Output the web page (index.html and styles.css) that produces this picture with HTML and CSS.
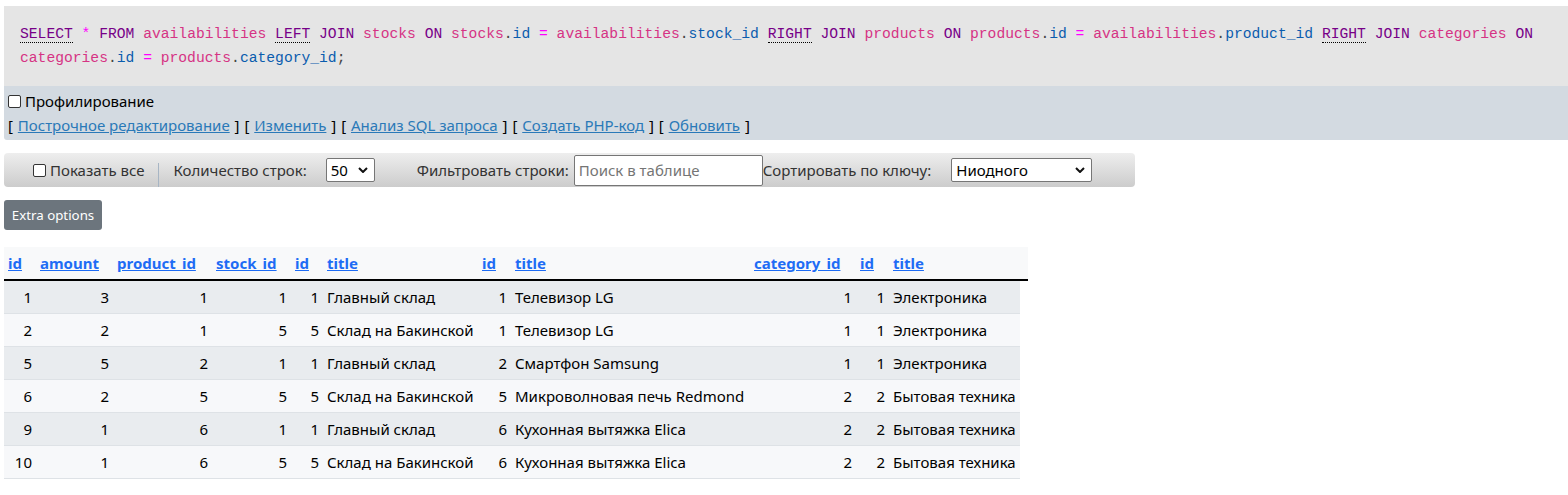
FILE: index.html
```html
<!DOCTYPE html>
<html lang="ru">
<head>
<meta charset="utf-8">
<title>SQL result</title>
<link rel="stylesheet" href="styles.css">
</head>
<body>
<div class="page">
  <div class="sqlbox"><code class="sql"><abbr class="kw" title="SELECT">SELECT</abbr> <span class="op">*</span> <span class="kw">FROM</span> <span class="tb">availabilities</span> <abbr class="kw" title="LEFT JOIN">LEFT</abbr> <span class="kw">JOIN</span> <span class="tb">stocks</span> <span class="kw">ON</span> <span class="tb">stocks</span><span class="dot">.</span><span class="col">id</span> <span class="op">=</span> <span class="tb">availabilities</span><span class="dot">.</span><span class="col">stock_id</span> <abbr class="kw" title="RIGHT JOIN">RIGHT</abbr> <span class="kw">JOIN</span> <span class="tb">products</span> <span class="kw">ON</span> <span class="tb">products</span><span class="dot">.</span><span class="col">id</span> <span class="op">=</span> <span class="tb">availabilities</span><span class="dot">.</span><span class="col">product_id</span> <abbr class="kw" title="RIGHT JOIN">RIGHT</abbr> <span class="kw">JOIN</span> <span class="tb">categories</span> <span class="kw">ON</span> <span class="tb">categories</span><span class="dot">.</span><span class="col">id</span> <span class="op">=</span> <span class="tb">products</span><span class="dot">.</span><span class="col">category_id</span><span class="dot">;</span></code></div>
  <div class="tools">
    <label class="prof"><input type="checkbox" class="cb"> Профилирование</label>
    <div class="links">[ <a href="#">Построчное редактирование</a> ] [ <a href="#">Изменить</a> ] [ <a href="#">Анализ SQL запроса</a> ] [ <a href="#">Создать PHP-код</a> ] [ <a href="#">Обновить</a> ]</div>
  </div>

  <div class="navbar">
    <label class="showall"><input type="checkbox" class="cb"> Показать все</label>
    <span class="sep"></span>
    <span class="lbl">Количество строк:</span>
    <span class="sel sel-rows">50<svg class="chev" viewBox="0 0 10 6" width="10" height="6"><path d="M1 1 L5 5 L9 1" fill="none" stroke="#111" stroke-width="2"/></svg></span>
    <span class="lbl lbl-filter">Фильтровать строки:</span>
    <span class="search">Поиск в таблице</span>
    <span class="lbl lbl-sort">Сортировать по ключу:</span>
    <span class="sel sel-sort">Ниодного<svg class="chev" viewBox="0 0 10 6" width="10" height="6"><path d="M1 1 L5 5 L9 1" fill="none" stroke="#111" stroke-width="2"/></svg></span>
  </div>

  <div class="extra-row"><span class="extra">Extra options</span></div>

  <table class="data">
    <thead>
      <tr>
        <th class="c1"><a href="#">id</a></th>
        <th class="c2"><a href="#">amount</a></th>
        <th class="c3"><a href="#">product_id</a></th>
        <th class="c4"><a href="#">stock_id</a></th>
        <th class="c5"><a href="#">id</a></th>
        <th class="c6"><a href="#">title</a></th>
        <th class="c7"><a href="#">id</a></th>
        <th class="c8"><a href="#">title</a></th>
        <th class="c9"><a href="#">category_id</a></th>
        <th class="c10"><a href="#">id</a></th>
        <th class="c11"><a href="#">title</a></th>
        <th class="c12"></th>
      </tr>
    </thead>
    <tbody>
      <tr><td class="n">1</td><td class="n">3</td><td class="n">1</td><td class="n">1</td><td class="n">1</td><td>Главный склад</td><td class="n">1</td><td>Телевизор LG</td><td class="n">1</td><td class="n">1</td><td>Электроника</td></tr>
      <tr><td class="n">2</td><td class="n">2</td><td class="n">1</td><td class="n">5</td><td class="n">5</td><td>Склад на Бакинской</td><td class="n">1</td><td>Телевизор LG</td><td class="n">1</td><td class="n">1</td><td>Электроника</td></tr>
      <tr><td class="n">5</td><td class="n">5</td><td class="n">2</td><td class="n">1</td><td class="n">1</td><td>Главный склад</td><td class="n">2</td><td>Смартфон Samsung</td><td class="n">1</td><td class="n">1</td><td>Электроника</td></tr>
      <tr><td class="n">6</td><td class="n">2</td><td class="n">5</td><td class="n">5</td><td class="n">5</td><td>Склад на Бакинской</td><td class="n">5</td><td>Микроволновая печь Redmond</td><td class="n">2</td><td class="n">2</td><td>Бытовая техника</td></tr>
      <tr><td class="n">9</td><td class="n">1</td><td class="n">6</td><td class="n">1</td><td class="n">1</td><td>Главный склад</td><td class="n">6</td><td>Кухонная вытяжка Elica</td><td class="n">2</td><td class="n">2</td><td>Бытовая техника</td></tr>
      <tr><td class="n">10</td><td class="n">1</td><td class="n">6</td><td class="n">5</td><td class="n">5</td><td>Склад на Бакинской</td><td class="n">6</td><td>Кухонная вытяжка Elica</td><td class="n">2</td><td class="n">2</td><td>Бытовая техника</td></tr>
    </tbody>
  </table>
</div>
</body>
</html>
```

FILE: styles.css
```css
html, body {
  margin: 0;
  padding: 0;
  background: #fff;
}
body {
  font-family: "Noto Sans", "Open Sans", sans-serif;
  font-size: 15px;
  color: #212529;
}
.page {
  padding: 6px 0 0 4px;
}
.sqlbox {
  background: #e5e5e5;
  padding: 16px;
  height: 48px;
}
.sql {
  display: block;
  font-family: "Liberation Mono", "DejaVu Sans Mono", monospace;
  font-size: 14.67px;
  line-height: 24px;
  color: #333;
}
.kw { color: #770088; }
abbr.kw {
  text-decoration: none;
  border-bottom: 1px dotted #000;
}
.op { color: #ff00ff; }
.tb { color: #d63384; }
.col { color: #0a5cae; }
.dot { color: #444; }

.tools {
  background: #d3dae1;
  padding: 3px 4px 3px 4px;
  border-bottom-left-radius: 3px;
  color: #000;
}
.prof {
  display: flex;
  align-items: center;
  height: 24px;
}
.cb {
  width: 13px;
  height: 13px;
  margin: 0 4px 0 0;
  appearance: none;
  -webkit-appearance: none;
  border: 1px solid #333;
  border-radius: 2px;
  background: #fff;
  box-sizing: border-box;
}
.links {
  height: 24px;
  line-height: 24px;
  word-spacing: 1px;
}
.links a {
  color: #2a79b8;
  text-decoration: underline;
  word-spacing: 0;
}

.navbar {
  margin-top: 13px;
  width: 1131px;
  height: 34px;
  box-sizing: border-box;
  display: flex;
  align-items: center;
  background: linear-gradient(#eeeeee, #cccccc);
  border-radius: 4px;
  padding-left: 29px;
  color: #333;
}
.showall {
  display: flex;
  align-items: center;
}
.sep {
  width: 1px;
  background: #a7b5c4;
  margin: 10px 14px 0 14px;
  align-self: stretch;
}
.lbl { white-space: nowrap; }
.sel {
  position: relative;
  display: flex;
  align-items: center;
  background: #fff;
  border: 1px solid #767676;
  border-radius: 2px;
  height: 24px;
  box-sizing: border-box;
  padding-left: 4px;
  color: #000;
}
.chev {
  position: absolute;
  right: 6px;
  top: 8px;
}
.sel-rows {
  width: 49px;
  margin-left: 19px;
}
.lbl-filter { margin-left: 42px; }
.search {
  margin-left: 5px;
  width: 189px;
  height: 31px;
  box-sizing: border-box;
  border: 1px solid #767676;
  border-radius: 2px;
  background: #fff;
  color: #757575;
  padding-left: 4px;
  display: flex;
  align-items: center;
}
.lbl-sort { margin-left: 0; }
.sel-sort {
  width: 141px;
  margin-left: 20px;
}

.extra-row {
  margin-top: 13px;
  display: flex;
}
.extra {
  display: inline-flex;
  align-items: center;
  justify-content: center;
  width: 98px;
  height: 30px;
  background: #6c757d;
  color: #fff;
  border-radius: 3px;
  font-size: 13.3px;
}

.data {
  margin-top: 17px;
  border-collapse: collapse;
  font-size: 15px;
}
.data th {
  background: #f8f9fa;
  text-align: left;
  padding: 5px 4px 5px 4px;
  line-height: 22px;
  border-bottom: 2px solid #000;
  font-weight: bold;
  white-space: nowrap;
}
.data th a { color: #1e6cf5; text-decoration: underline; }
.data td {
  padding: 6px 4px;
  line-height: 20px;
  border-bottom: 1px solid #dee2e6;
  white-space: nowrap;
  color: #000;
}
.data tbody tr:nth-child(odd) td { background: #e9ecef; }
.data tbody tr:nth-child(even) td { background: #f7f8fa; }
.data td.n { text-align: right; padding-right: 4px; }
.c1 { width: 24px; }
.c2 { width: 69px; }
.c3 { width: 91px; }
.c4 { width: 71px; }
.c5 { width: 24px; }
.c6 { width: 147px; }
.c7 { width: 25px; }
.c8 { width: 231px; }
.c9 { width: 98px; }
.c10 { width: 25px; }
.c11 { width: 122px; }
.data th.c12 { width: 8px; padding: 0; }
```
